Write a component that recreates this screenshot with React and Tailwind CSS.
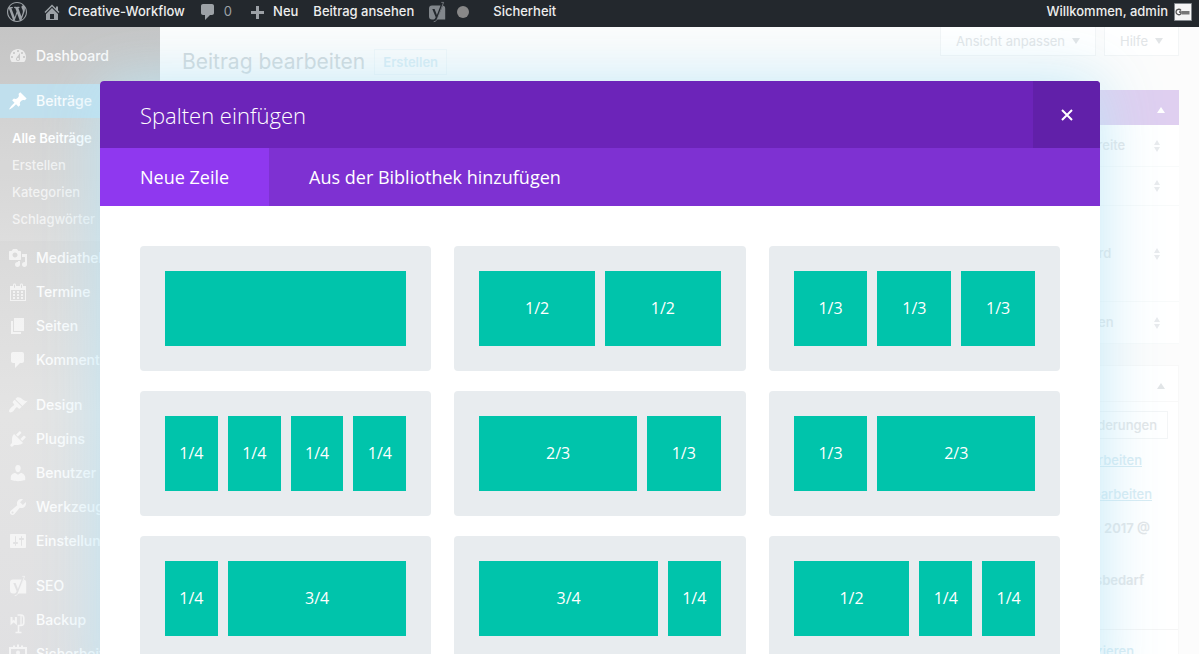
const ICONS = {
  wordpress: 'M20 10c0-5.51-4.49-10-10-10C4.48 0 0 4.49 0 10c0 5.52 4.48 10 10 10 5.51 0 10-4.48 10-10zM7.78 15.37L4.37 6.22c.55-.02 1.17-.08 1.17-.08.5-.06.44-1.13-.06-1.11 0 0-1.45.11-2.37.11-.18 0-.37 0-.58-.01C4.12 2.69 6.87 1.11 10 1.11c2.33 0 4.45.87 6.05 2.34-.68-.11-1.65.39-1.65 1.58 0 .74.45 1.36.9 2.1.35.61.55 1.36.55 2.46 0 1.49-1.4 5-1.4 5l-3.03-8.37c.54-.02.82-.17.82-.17.5-.05.44-1.25-.06-1.22 0 0-1.44.12-2.38.12-.87 0-2.33-.12-2.33-.12-.5-.03-.56 1.2-.06 1.22l.92.08 1.26 3.41zM17.41 10c.24-.64.74-1.87.43-4.25.7 1.29 1.05 2.71 1.05 4.25 0 3.29-1.73 6.24-4.4 7.78.97-2.59 1.94-5.2 2.92-7.78zM6.1 18.09C3.12 16.65 1.11 13.53 1.11 10c0-1.3.23-2.48.72-3.59C3.25 10.3 4.67 14.2 6.1 18.09zm4.03-6.63l2.58 6.98c-.86.29-1.76.45-2.71.45-.79 0-1.57-.11-2.29-.33.81-2.38 1.62-4.74 2.42-7.1z',
  home: 'M16 8.5l1.53 1.53-1.06 1.06L10 4.6l-6.47 6.49-1.06-1.06L10 2.5l4 4v-2h2v4zm-6-2.46l6 5.99V18H4v-5.97zM12 17v-5H8v5h4z',
  comment: 'M5 2h9c1.1 0 2 .9 2 2v7c0 1.1-.9 2-2 2h-2l-5 5v-5H5c-1.1 0-2-.9-2-2V4c0-1.1.9-2 2-2z',
  plus: 'M17 9v3h-5v5H9v-5H4V9h5V4h3v5z',
  dashboard: 'M3.76 16h12.48c1.1-1.37 1.76-3.11 1.76-5 0-4.42-3.58-8-8-8s-8 3.58-8 8c0 1.89.66 3.63 1.76 5zM10 4c.55 0 1 .45 1 1s-.45 1-1 1-1-.45-1-1 .45-1 1-1zM6 6c.55 0 1 .45 1 1s-.45 1-1 1-1-.45-1-1 .45-1 1-1zm8 0c.55 0 1 .45 1 1s-.45 1-1 1-1-.45-1-1 .45-1 1-1zm-5.37 5.55L12 7v6c0 1.1-.9 2-2 2s-2-.9-2-2c0-.57.24-1.08.63-1.45zM4 10c.55 0 1 .45 1 1s-.45 1-1 1-1-.45-1-1 .45-1 1-1zm12 0c.55 0 1 .45 1 1s-.45 1-1 1-1-.45-1-1 .45-1 1-1zm-5 3c0-.55-.45-1-1-1s-1 .45-1 1 .45 1 1 1 1-.45 1-1z',
  pin: 'M10.44 3.02l1.82-1.82 6.36 6.35-1.83 1.82c-1.05-.68-2.48-.57-3.41.36l-.75.75c-.92.93-1.04 2.35-.35 3.41l-1.83 1.82-2.41-2.41-2.8 2.79c-.42.42-3.38 2.71-3.8 2.29s1.86-3.39 2.28-3.81l2.79-2.79L4.1 9.36l1.83-1.82c1.05.69 2.48.57 3.4-.36l.75-.75c.93-.92 1.05-2.35.36-3.41z',
  media: 'M13 11V4c0-.55-.45-1-1-1h-1.67L9 1H5L3.67 3H2c-.55 0-1 .45-1 1v7c0 .55.45 1 1 1h10c.55 0 1-.45 1-1zM7 4.5c1.38 0 2.5 1.12 2.5 2.5S8.38 9.5 7 9.5 4.5 8.38 4.5 7 5.62 4.5 7 4.5zM14 6h5v10.5c0 1.38-1.12 2.5-2.5 2.5S14 17.88 14 16.5s1.12-2.5 2.5-2.5c.17 0 .34.02.5.05V9h-3V6zm-4 8.05V13h2v3.5c0 1.38-1.12 2.5-2.5 2.5S7 17.88 7 16.5 8.12 14 9.5 14c.17 0 .34.02.5.05z',
  calendar: 'M15 4h3v15H2V4h3V3c0-.83.67-1.5 1.5-1.5S8 2.17 8 3v1h4V3c0-.83.67-1.5 1.5-1.5S15 2.17 15 3v1zM6 3v2.5c0 .28.22.5.5.5s.5-.22.5-.5V3c0-.28-.22-.5-.5-.5S6 2.72 6 3zm7 0v2.5c0 .28.22.5.5.5s.5-.22.5-.5V3c0-.28-.22-.5-.5-.5s-.5.22-.5.5zm4 15V8H3v10h14zM5 9h2v2H5zM9 9h2v2H9zM13 9h2v2h-2zM5 12h2v2H5zM9 12h2v2H9zM13 12h2v2h-2zM5 15h2v2H5zM9 15h2v2H9zM13 15h2v2h-2z',
  page: 'M6 15V2h10v13H6zm-1 1h8v2H3V5h2v11z',
  brush: 'M14.48 11.06L7.41 3.99l1.5-1.5c.5-.56 2.3-.47 3.51.32 1.21.8 1.43 1.28 2.91 2.1 1.18.64 2.45 1.26 4.45.85zm-.71.71L6.7 4.7 4.93 6.47c-.39.39-.39 1.02 0 1.41l1.06 1.06c.39.39.39 1.03 0 1.42-.6.6-1.43 1.11-2.21 1.69-.35.26-.7.53-1.01.84C1.43 14.23.4 16.08 1.4 17.07c.99 1 2.84-.03 4.18-1.36.31-.31.58-.66.85-1.02.57-.78 1.08-1.61 1.69-2.21.39-.39 1.02-.39 1.41 0l1.06 1.06c.39.39 1.02.39 1.41 0z',
  plug: 'M13.11 4.36L9.87 7.6 8 5.73l3.24-3.24c.35-.34 1.05-.2 1.56.32.52.51.66 1.21.31 1.55zm-8 1.77l.91-1.12 9.01 9.01-1.19.84c-.71.71-2.63 1.16-3.82 1.16H6.14L4.9 17.26c-.59.59-1.54.59-2.12 0-.59-.58-.59-1.53 0-2.12l1.24-1.24v-3.88c0-1.13.4-3.19 1.09-3.89zm7.26 3.97l3.24-3.24c.34-.35 1.04-.21 1.55.31.52.51.66 1.21.31 1.55l-3.24 3.25z',
  user: 'M10 9.25c-2.27 0-2.73-3.44-2.73-3.44C7 4.02 7.82 2 9.97 2c2.16 0 2.98 2.02 2.71 3.81 0 0-.41 3.44-2.68 3.44zm0 2.57L12.72 10c2.39 0 4.52 2.33 4.52 4.53v2.49s-3.65 1.13-7.24 1.13c-3.65 0-7.24-1.13-7.24-1.13v-2.49c0-2.25 1.94-4.48 4.47-4.48z',
  wrench: 'M16.68 9.77c-1.34 1.34-3.3 1.67-4.95.99l-5.41 6.52c-.99.99-2.59.99-3.58 0s-.99-2.59 0-3.57l6.52-5.42c-.68-1.65-.35-3.61.99-4.95 1.28-1.28 3.12-1.62 4.72-1.06l-2.89 2.89 2.82 2.82 2.86-2.87c.53 1.58.18 3.39-1.08 4.65zM3.81 16.21c.4.39 1.04.39 1.43 0 .4-.4.4-1.04 0-1.43-.39-.4-1.03-.4-1.43 0-.39.39-.39 1.03 0 1.43z',
  settings: 'M18 16V4c0-.55-.45-1-1-1H3c-.55 0-1 .45-1 1v12c0 .55.45 1 1 1h14c.55 0 1-.45 1-1zM8 11h1c.55 0 1 .45 1 1s-.45 1-1 1H8v1.5c0 .28-.22.5-.5.5s-.5-.22-.5-.5V13H6c-.55 0-1-.45-1-1s.45-1 1-1h1V5.500c0-.28.22-.5.5-.5s.5.22.5.5V11zm5-2h-1c-.55 0-1-.45-1-1s.45-1 1-1h1V5.500c0-.28.22-.5.5-.5s.5.22.5.5V7h1c.55 0 1 .45 1 1s-.45 1-1 1h-1v5.500c0 .28-.22.5-.5.5s-.5-.22-.5-.5V9z',
};

function Icon({ name, className = '' }) {
  return (
    <svg viewBox="0 0 20 20" aria-hidden="true" className={`size-5 shrink-0 overflow-visible fill-current ${className}`}>
      {name === 'yoast' && <YoastShape />}
      {name === 'backup' && <BackupShape />}
      {name === 'badge' && <BadgeShape />}
      {ICONS[name] && <path fillRule="evenodd" d={ICONS[name]} />}
    </svg>
  );
}

function YoastShape() {
  return (
    <>
      <path d="M5 3.5h8.6L9.9 13 7.6 7H5.3l3.4 8.3c-.5 1.3-1 1.9-2 2.2H5c-2 0-3-1-3-3v-8c0-2 1-3 3-3z" />
      <path d="M15.9 3.6c1.6.4 2.3 1.4 2.3 2.9v11H9.7c.6-.7 1.1-1.6 1.6-2.9z" />
      <path d="M14.3 .4h2.3L10.7 15.800c-.8 2.500-1.800 3.700-4 3.900" fill="none" stroke="currentColor" strokeWidth=".8" />
    </>
  );
}

function BackupShape() {
  return (
    <g fill="none" stroke="currentColor">
      <path strokeWidth="2" d="M3.500 7v6l2.200-2 2.200 2V7" />
      <path strokeWidth="1.600" d="M9.500 5h3.500q2.800 0 2.800 3v4.500q0 3-2.800 3h-2.500V22" />
      <path strokeWidth="1.300" d="M13 5.500v10M7.500 22.500h6" />
    </g>
  );
}

function BadgeShape() {
  return (
    <>
      <path fillRule="evenodd" d="M1 3h4V1.5h2V3h2V.5h2V3h2V1.5h2V3h4v15H1zM3 5v11h14V5z" />
      <circle cx="10" cy="8.500" r="2" />
      <path d="M6 14c0-2.500 1.500-3.500 4-3.500s4 1 4 3.500z" />
    </>
  );
}

const MENU = [
  [{ icon: 'media', label: 'Mediathek' }, { icon: 'calendar', label: 'Termine' }, { icon: 'page', label: 'Seiten' }, { icon: 'comment', label: 'Kommentare' }],
  [{ icon: 'brush', label: 'Design' }, { icon: 'plug', label: 'Plugins' }, { icon: 'user', label: 'Benutzer' }, { icon: 'wrench', label: 'Werkzeuge' }, { icon: 'settings', label: 'Einstellungen' }],
  [{ icon: 'yoast', label: 'SEO' }, { icon: 'backup', label: 'Backup' }, { icon: 'badge', label: 'Sicherheit' }],
];

function MenuItem({ icon, label, active }) {
  return (
    <a href="#" className={`flex h-[34px] items-center gap-2 pl-2 whitespace-nowrap ${active ? 'bg-[#c0dfed]' : ''}`}>
      <Icon name={icon} className={active ? 'text-white' : 'text-white/65'} />
      <span className="text-white/90">{label}</span>
    </a>
  );
}

function Sidebar() {
  return (
    <nav aria-label="Hauptmenü" className="w-40 shrink-0 overflow-hidden bg-[linear-gradient(180deg,#c5c5c5_0%,#cfcfcf_16%,#dadada_34%,#e4e4e4_60%,#e0e0e2_100%)] pt-3 text-sm font-medium">
      <MenuItem icon="dashboard" label="Dashboard" />
      <div className="pt-[11px]">
        <MenuItem icon="pin" label="Beiträge" active />
      </div>
      <div className="flex flex-col bg-white/10 pt-[7px] pb-2 pl-3 text-[13px] leading-[27px] text-white/70">
        <a href="#" className="font-semibold text-white">Alle Beiträge</a>
        <a href="#">Erstellen</a>
        <a href="#">Kategorien</a>
        <a href="#">Schlagwörter</a>
      </div>
      <div className="flex flex-col gap-[11px]">
        {MENU.map((group) => (
          <div key={group[0].label}>
            {group.map((item) => <MenuItem key={item.label} {...item} />)}
          </div>
        ))}
      </div>
    </nav>
  );
}

function AdminBar() {
  return (
    <header className="flex h-[27px] items-center bg-[#23282d] px-[7px] pb-[3px] text-[13px] font-medium whitespace-nowrap text-[#eee]">
      <a href="#" aria-label="WordPress" className="text-[#9ca1a6]"><Icon name="wordpress" /></a>
      <a href="#" className="ml-[15px] flex items-center gap-[6px]"><Icon name="home" className="text-[#9ca1a6]" />Creative-Workflow</a>
      <a href="#" className="ml-[13px] flex items-center gap-[6px] text-[#9ca1a6]"><Icon name="comment" /><span className="font-normal">0</span></a>
      <a href="#" className="ml-[15px] flex items-center gap-[6px]"><Icon name="plus" className="text-[#9ca1a6]" />Neu</a>
      <a href="#" className="ml-[15px]">Beitrag ansehen</a>
      <a href="#" aria-label="SEO" className="ml-[13px] flex items-center gap-[10px] text-[#82878c]"><Icon name="yoast" /><span className="size-3 rounded-full bg-[#888]" /></a>
      <a href="#" className="ml-6">Sicherheit</a>
      <a href="#" className="ml-auto flex items-center gap-[6px]">
        Willkommen, admin
        <svg viewBox="0 0 18 18" aria-hidden="true" className="size-[18px]">
          <path fill="#f5f5f5" stroke="#82878c" d="M.5.5h17v17H.5z" />
          <path fill="none" stroke="#555" strokeWidth="1.3" d="M7 7.500C5.500 5.500 2 6 2 9s4 3.500 5 1.500V9H5" />
          <path fill="#777" d="M7.500 8h8v3.500h-8z" />
        </svg>
      </a>
    </header>
  );
}

function Caret({ up, className = '' }) {
  return (
    <svg viewBox="0 0 8 6" aria-hidden="true" className={`h-[6px] w-2 fill-current ${className}`}>
      <path d={up ? 'M4 0l4 6H0z' : 'M4 6l4-6H0z'} />
    </svg>
  );
}

function Sorter() {
  return (
    <svg viewBox="0 0 8 12" aria-hidden="true" className="h-3 w-2 fill-[#e9ebed]"><path d="M4 0l3 5H1zM4 12l3-5H1z" /></svg>
  );
}

function ModuleRow({ label, height }) {
  return (
    <div className={`flex items-center justify-end gap-6 border-b border-[#f8fafa] pr-[18px] ${height}`}>
      <span className="w-[74px] whitespace-nowrap">{label}</span>
      <Sorter />
    </div>
  );
}

function ScreenButton({ children }) {
  return (
    <button type="button" className="flex items-center gap-[7px] border border-t-0 border-[#f3f5f6] bg-white px-[15px]">
      {children}
      <Caret />
    </button>
  );
}

function Editor() {
  return (
    <main className="flex min-w-0 flex-1 flex-col bg-[#fcfcfc] pr-5 pl-[22px] text-[#e2e5e7]">
      <div className="flex items-start justify-between">
        <div className="flex items-center gap-[9px] pt-[21px]">
          <h1 className="text-[21px] leading-[27px] text-[#cfd6d9]">Beitrag bearbeiten</h1>
          <a href="#" className="border border-[#f1f6f8] px-2 text-[13px] leading-6 font-semibold text-[#d8ecf4]">Erstellen</a>
        </div>
        <div className="flex gap-2 text-[13px] leading-7">
          <ScreenButton>Ansicht anpassen</ScreenButton>
          <ScreenButton>Hilfe</ScreenButton>
        </div>
      </div>
      <div className="mt-[15px] flex w-[280px] flex-col gap-[21px] self-end text-[13px] font-medium">
        <section className="bg-white">
          <div className="flex h-[35px] items-center justify-end bg-[#dfcff0] pt-1 pr-[14px] text-white"><Caret up /></div>
          <ModuleRow label="Volle Breite" height="h-[42px]" />
          <ModuleRow label="" height="h-[39px]" />
          <ModuleRow label="Standard" height="h-24" />
          <ModuleRow label="Anzeigen" height="h-[42px]" />
        </section>
        <section className="flex flex-col border border-[#f8f8f8] bg-white text-right">
          <div className="flex h-9 items-center justify-end border-b border-[#f8f8f8] pt-1 pr-[13px]"><Caret up /></div>
          <button type="button" className="mt-[9px] mr-[10px] self-end border border-[#f3f5f6] px-[10px] leading-[26px]">Vorschau der Änderungen</button>
          <a href="#" className="mt-1 mr-9 leading-[34px] text-[#d7ebf3] underline">Bearbeiten</a>
          <a href="#" className="mr-[26px] leading-[34px] text-[#d7ebf3] underline">Bearbeiten</a>
          <span className="mr-7 leading-[34px] font-semibold">10. Jan 2017 @</span>
          <span className="mt-[18px] mr-[34px] leading-[34px] font-semibold">Übersetzungsbedarf</span>
          <a href="#" className="mt-8 border-t border-[#f5f5f5] pr-11 leading-[42px] text-[#d7ebf3]">Duplizieren</a>
        </section>
      </div>
    </main>
  );
}

const LAYOUTS = [
  [{ span: 'col-span-12', label: '' }],
  [{ span: 'col-span-6', label: '1/2' }, { span: 'col-span-6', label: '1/2' }],
  [{ span: 'col-span-4', label: '1/3' }, { span: 'col-span-4', label: '1/3' }, { span: 'col-span-4', label: '1/3' }],
  [{ span: 'col-span-3', label: '1/4' }, { span: 'col-span-3', label: '1/4' }, { span: 'col-span-3', label: '1/4' }, { span: 'col-span-3', label: '1/4' }],
  [{ span: 'col-span-8', label: '2/3' }, { span: 'col-span-4', label: '1/3' }],
  [{ span: 'col-span-4', label: '1/3' }, { span: 'col-span-8', label: '2/3' }],
  [{ span: 'col-span-3', label: '1/4' }, { span: 'col-span-9', label: '3/4' }],
  [{ span: 'col-span-9', label: '3/4' }, { span: 'col-span-3', label: '1/4' }],
  [{ span: 'col-span-6', label: '1/2' }, { span: 'col-span-3', label: '1/4' }, { span: 'col-span-3', label: '1/4' }],
];

function ColumnDialog() {
  return (
    <div role="dialog" aria-labelledby="dialog-title" className="absolute top-[81px] right-[99px] left-[100px] overflow-hidden rounded-t bg-white font-['Open_Sans',sans-serif] text-white shadow-[0_0_60px_rgba(186,230,246,0.9)]">
      <div className="flex h-[67px] bg-[#6c24b9]">
        <h2 id="dialog-title" className="flex-1 pl-10 text-[22px] leading-[68px] font-[350]">Spalten einfügen</h2>
        <button type="button" aria-label="Schließen" className="flex w-[67px] items-center justify-center bg-[#6120a9]">
          <svg viewBox="0 0 12 12" aria-hidden="true" className="size-3 fill-none stroke-white stroke-2"><path d="M1 1l10 10M11 1L1 11" /></svg>
        </button>
      </div>
      <div role="tablist" className="flex h-[58px] bg-[#7e31d2] text-lg font-medium">
        <button type="button" role="tab" aria-selected="true" className="bg-[#8f38ef] px-10">Neue Zeile</button>
        <button type="button" role="tab" aria-selected="false" className="px-10">Aus der Bibliothek hinzufügen</button>
      </div>
      <div className="grid grid-cols-3 gap-x-[23px] gap-y-5 p-10 text-base font-medium">
        {LAYOUTS.map((columns, index) => (
          <button type="button" key={index} aria-label={columns[0].label ? undefined : 'Volle Breite'} className="grid h-[125px] grid-cols-12 gap-x-[10px] rounded bg-[#e8ecef] p-[25px]">
            {columns.map((column, position) => (
              <span key={position} className={`flex h-[75px] items-center justify-center bg-[#00c4ab] pb-[2px] ${column.span}`}>{column.label}</span>
            ))}
          </button>
        ))}
      </div>
    </div>
  );
}

export default function App() {
  return (
    <div className="relative flex h-screen flex-col overflow-hidden font-[Inter,sans-serif]">
      <div className="relative z-10"><AdminBar /></div>
      <div className="flex flex-1">
        <Sidebar />
        <Editor />
      </div>
      <ColumnDialog />
    </div>
  );
}
